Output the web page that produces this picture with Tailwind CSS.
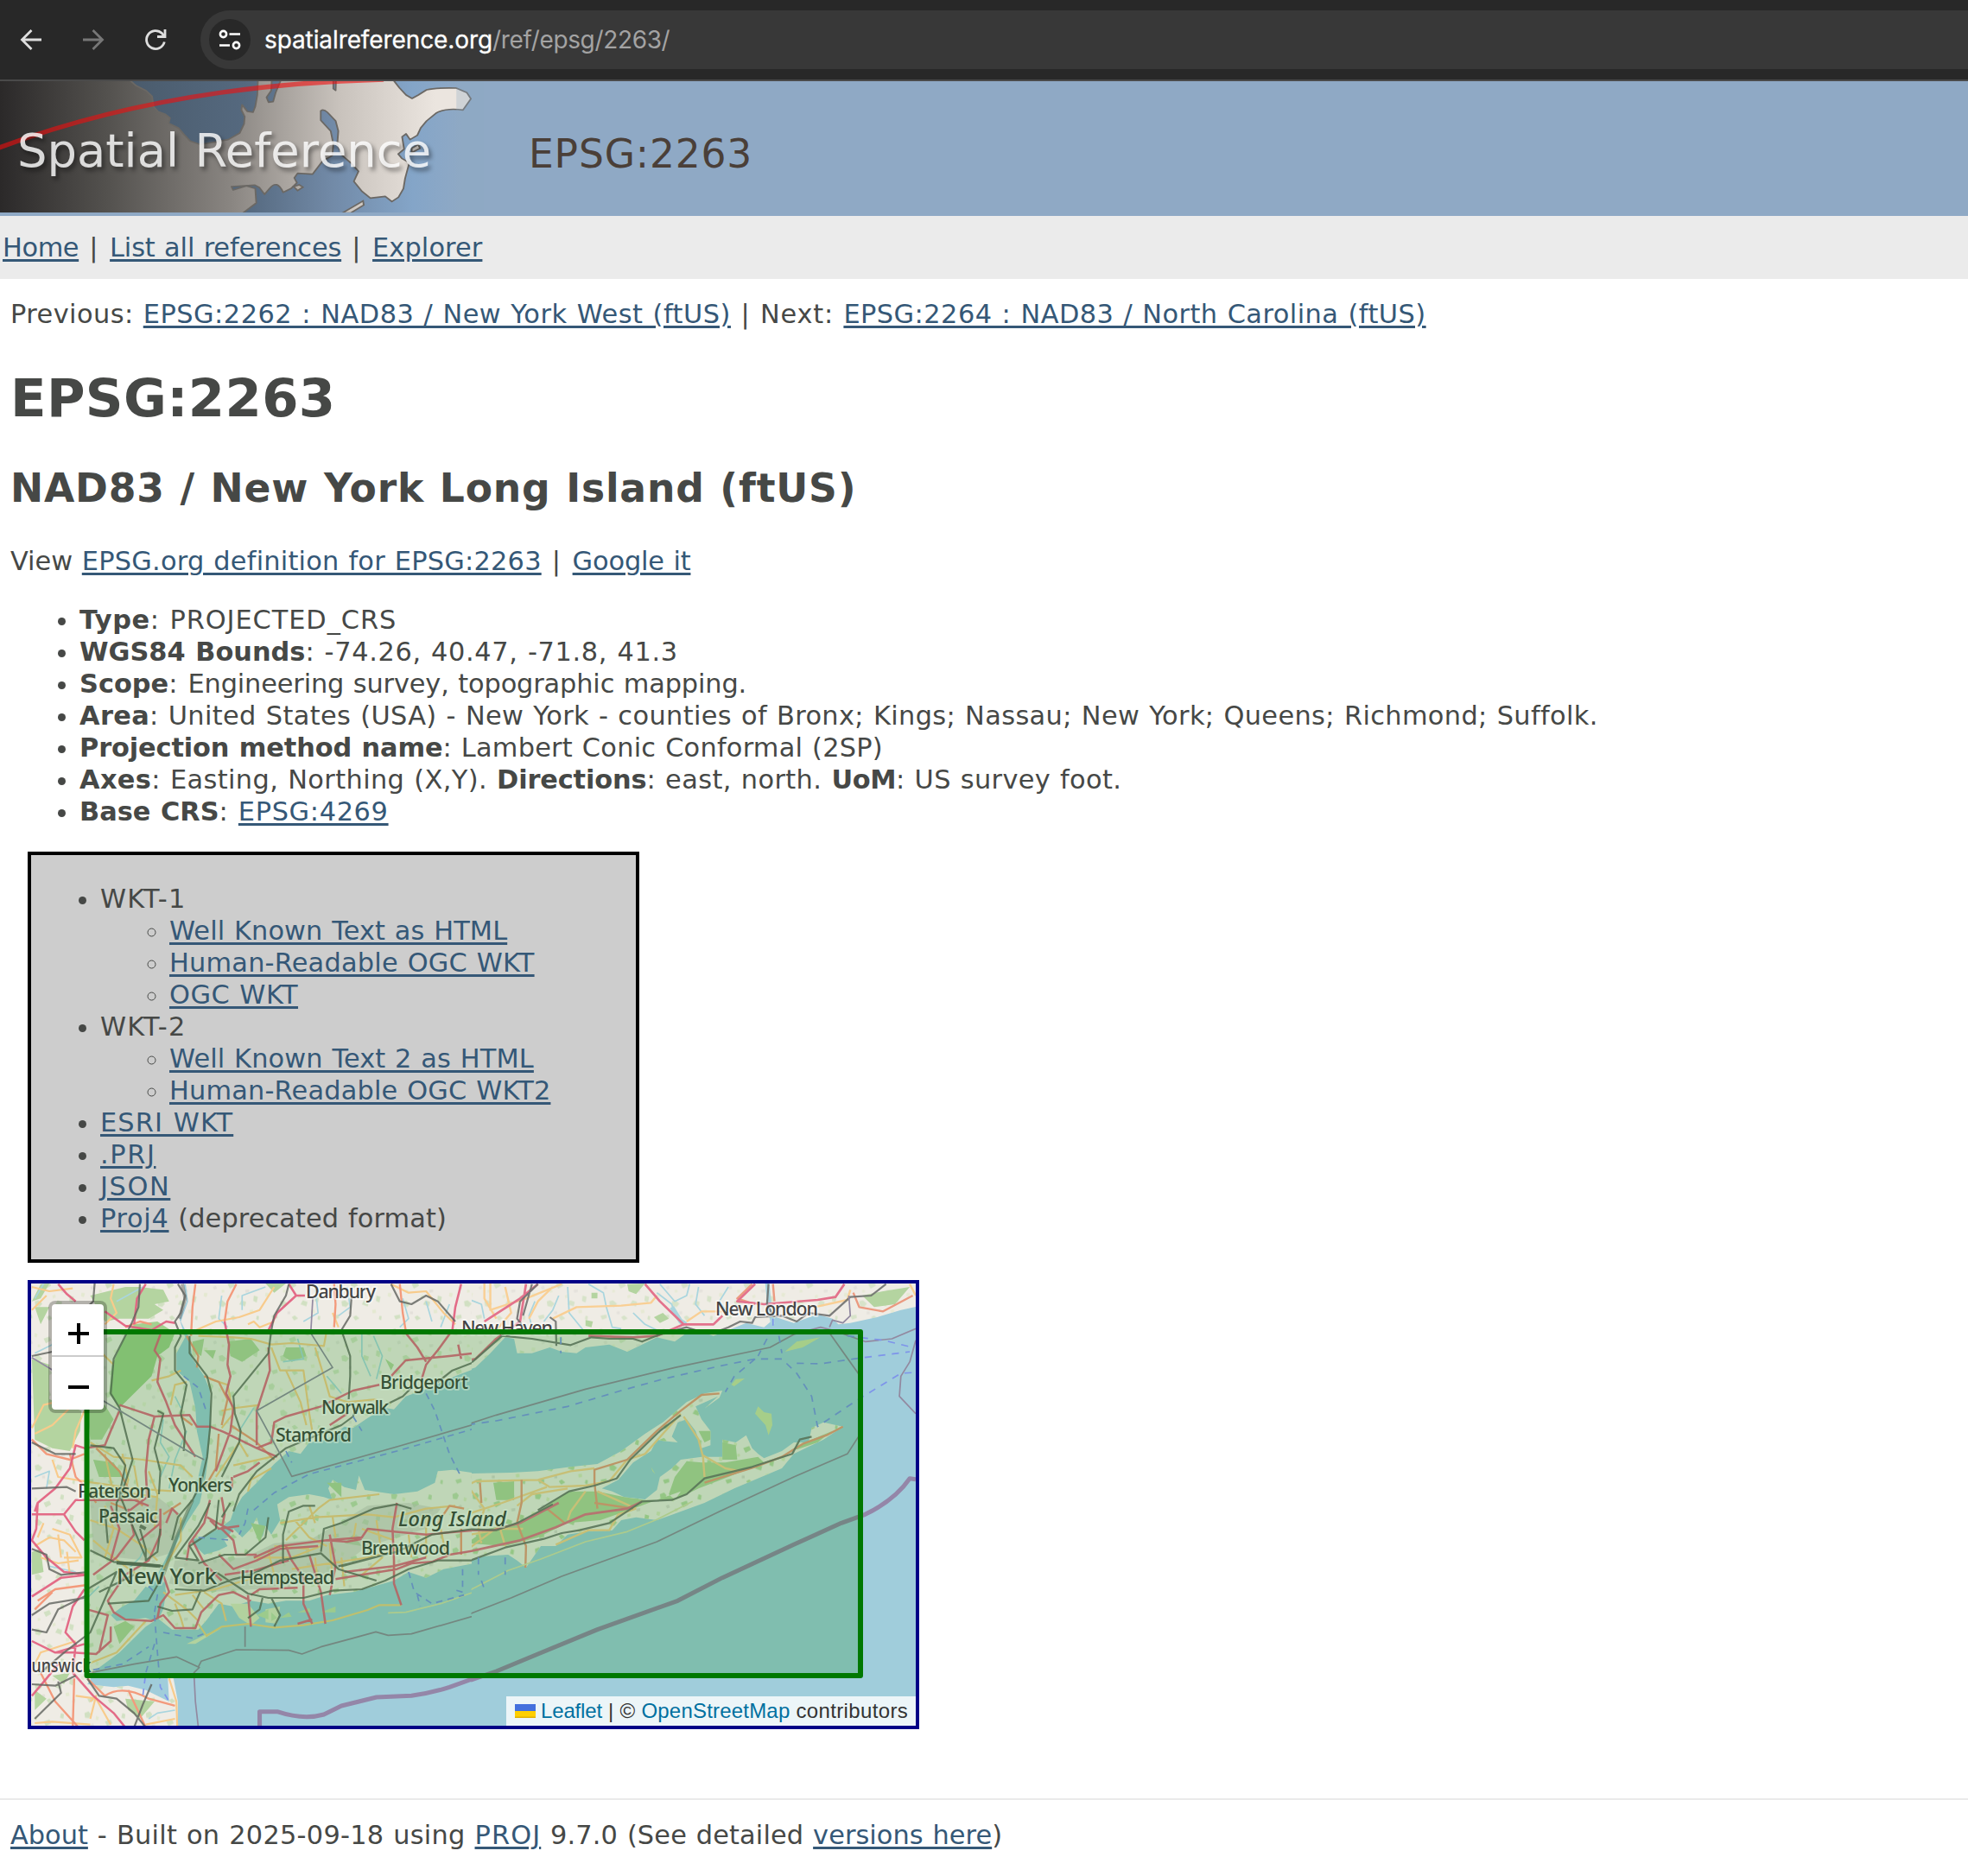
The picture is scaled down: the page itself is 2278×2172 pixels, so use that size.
<!DOCTYPE html>
<html lang="en">
<head>
<meta charset="utf-8">
<title>EPSG:2263</title>
<script src="https://cdn.jsdelivr.net/npm/@tailwindcss/browser@4"></script>
</head>
<body class="bg-white text-[#464846] font-['DejaVu_Sans',sans-serif] text-[30.4px] leading-[37px] [word-spacing:1px] overflow-hidden">

<!-- Browser toolbar -->
<div class="flex items-center h-[94px] bg-[#282828] border-b-2 border-[#4a4a4a] pl-4">
  <svg class="w-10 h-10 shrink-0" viewBox="0 0 40 40" fill="none" stroke="#dedede" stroke-width="2.8"><path d="M32 20H10M20.500 9L9.500 20L20.500 31"/></svg>
  <svg class="w-10 h-10 shrink-0 ml-8" viewBox="0 0 40 40" fill="none" stroke="#777" stroke-width="2.8"><path d="M8 20H30M19.500 9L30.500 20L19.500 31"/></svg>
  <svg class="w-10 h-10 shrink-0 ml-8" viewBox="0 0 40 40" fill="none" stroke="#dedede" stroke-width="2.8"><path d="M30.300 22.500A10.500 10.500 0 1 1 27.500 12.600L30 15.500"/><path d="M31 8V16.500H22"/></svg>
  <div class="flex items-center flex-1 h-[68px] ml-8 rounded-l-[34px] bg-[#383838] pl-[10px]">
    <div class="w-12 h-12 rounded-full bg-[#282828] flex items-center justify-center">
      <svg class="w-7 h-7" viewBox="0 0 28 28" fill="none" stroke="#fff" stroke-width="2.600"><circle cx="6.500" cy="7.500" r="3.600"/><path d="M13.500 7.500H26M2 20.500H14"/><circle cx="21.500" cy="20.500" r="3.600"/></svg>
    </div>
    <div class="ml-4 font-['Inter',sans-serif] text-[28px] [word-spacing:0] text-[#a3a3a3]"><span class="text-white tracking-[-0.1px] [-webkit-text-stroke:0.3px_white]">spatialreference.org</span><span class="tracking-[-0.35px]">/ref/epsg/2263/</span></div>
  </div>
</div>

<!-- Banner -->
<header class="flex items-center h-[156px] bg-[#8fa9c5]">
  <svg class="w-[560px] h-[152px] mb-1 shrink-0" viewBox="0 42 1463 456" preserveAspectRatio="none">
    <defs>
      <linearGradient id="land" gradientUnits="userSpaceOnUse" x1="0" y1="0" x2="1463" y2="0"><stop offset="0" stop-color="#2b2929"/><stop offset=".22" stop-color="#53514e"/><stop offset=".48" stop-color="#8a8682"/><stop offset=".7" stop-color="#c8c2bc"/><stop offset=".9" stop-color="#ebe5df"/></linearGradient>
      <linearGradient id="sea" gradientUnits="userSpaceOnUse" x1="390" y1="0" x2="1400" y2="0"><stop offset="0" stop-color="#4a5b6c"/><stop offset=".35" stop-color="#55697f"/><stop offset=".6" stop-color="#7189a6"/><stop offset=".85" stop-color="#84a5c8"/><stop offset="1" stop-color="#8fa9c5"/></linearGradient>
    </defs>
    <rect y="42" width="1463" height="456" fill="url(#land)"/>
    <g fill="url(#sea)" stroke="#6b6864" stroke-width="5" stroke-linejoin="round">
      <path d="M390 36L412 58L442 75L460 95L464 130L478 148L500 157L514 170L510 188L540 205L555 225L575 250L605 262L640 255L690 245L725 222L738 190L740 165L730 142L732 124L748 147L765 150L772 130L778 90L780 36Z"/>
      <path d="M822 36L820 75L806 98L812 115L826 113L834 80L850 36Z"/>
      <path d="M1008 36L1008 68L1015 74L1016 36Z"/>
      <path d="M970 145Q978 138 990 150L1015 180L1023 215L1020 260L1035 300L1060 325L1084 355L1070 390L1095 425L1120 448L1165 442L1185 460L1205 445L1220 415L1225 380L1232 350L1238 325L1215 310L1204 295L1222 278L1216 235L1228 225L1240 245L1262 230L1272 205L1290 180L1320 152Q1350 134 1400 142L1424 103L1412 82L1380 66Q1320 64 1290 72L1265 90L1246 102L1228 90L1208 65L1188 36L1470 36L1470 504L730 504L775 465L772 415L745 406L705 420L700 408L770 403L785 412L800 435L815 415Q838 382 856 428L880 415L898 395L890 378L900 362L945 365L975 320L1005 300L1008 260L1000 215L970 178Z"/>
    </g>
    <g fill="url(#land)" stroke="#6b6864" stroke-width="5"><path d="M1035 500L1098 458L1100 472L1060 500Z"/><path d="M888 408L905 402L916 410L900 422Z"/><path d="M1245 275L1265 262L1270 275L1245 290Z"/></g>
    <rect x="1380" y="42" width="90" height="456" fill="#8fa9c5" fill-opacity=".3"/>
    <path d="M-5 274Q500 55 1160 36" fill="none" stroke="#f00d0d" stroke-opacity=".6" stroke-width="16"/>
    <g transform="scale(2.613 3)" font-family="DejaVu Sans" font-size="53">
      <text class="[text-shadow:3px_4px_5px_rgba(0,0,0,.5)]" x="20" y="113.500" textLength="479" lengthAdjust="spacingAndGlyphs" fill="#fff" fill-opacity=".82">Spatial Reference</text>
    </g>
  </svg>
  <div class="ml-[52px] mt-[13px] text-[45.6px] leading-[56px] tracking-[0.8px] text-[#4a3f38]">EPSG:2263</div>
</header>

<nav class="h-[73px] bg-[#ebebeb] pl-[3px] pt-[18px] whitespace-pre"><a class="text-[#355877] underline decoration-[3px] underline-offset-[3px] tracking-[-0.4px]">Home</a><span class="tracking-[1.45px]"> | </span><a class="text-[#355877] underline decoration-[3px] underline-offset-[3px] tracking-[-0.15px]">List all references</a><span class="tracking-[1.45px]"> | </span><a class="text-[#355877] underline decoration-[3px] underline-offset-[3px] tracking-[0.1px]">Explorer</a></nav>

<main class="pl-3 whitespace-nowrap">
  <p class="mt-[22px]"><span class="tracking-[0.44px]">Previous: </span><a class="text-[#355877] underline decoration-[3px] underline-offset-[3px] tracking-[0.5px]">EPSG:2262 : NAD83 / New York West (ftUS)</a><span class="tracking-[0.8px]"> | Next: </span><a class="text-[#355877] underline decoration-[3px] underline-offset-[3px] tracking-[0.46px]">EPSG:2264 : NAD83 / North Carolina (ftUS)</a></p>
  <h1 class="mt-[42px] text-[60.8px] leading-[74px] font-bold tracking-[0.35px]">EPSG:2263</h1>
  <h2 class="mt-10 text-[45.6px] leading-[55px] font-bold tracking-[0.81px]">NAD83 / New York Long Island (ftUS)</h2>
  <p class="mt-[38px]">View <a class="text-[#355877] underline decoration-[3px] underline-offset-[3px] tracking-[0.22px]">EPSG.org definition for EPSG:2263</a><span class="tracking-[1.45px]"> | </span><a class="text-[#355877] underline decoration-[3px] underline-offset-[3px] tracking-[-0.15px]">Google it</a></p>
  <ul class="mt-[31px] pl-20 list-disc">
    <li><b class="tracking-[0.6px]">Type</b><span class="tracking-[0.92px]">: PROJECTED_CRS</span></li>
    <li><b>WGS84 Bounds</b><span class="tracking-[0.65px]">: -74.26, 40.47, -71.8, 41.3</span></li>
    <li><b>Scope</b><span class="tracking-[0.7px]">: </span><span class="tracking-[-0.14px]">Engineering survey, topographic mapping.</span></li>
    <li><b class="tracking-[0.36px]">Area</b><span class="tracking-[0.36px]">: United States (USA) - New York - counties of Bronx; Kings; Nassau; New York; Queens; Richmond; Suffolk.</span></li>
    <li><b class="tracking-[-0.13px]">Projection method name</b><span class="tracking-[0.23px]">: Lambert Conic Conformal (2SP)</span></li>
    <li><b class="tracking-[0.36px]">Axes</b><span class="tracking-[0.38px]">: Easting, Northing (X,Y). </span><b class="tracking-[-0.15px]">Directions</b><span class="tracking-[0.39px]">: east, north. </span><b class="tracking-[-0.4px]">UoM</b><span class="tracking-[0.34px]">: US survey foot.</span></li>
    <li><b>Base CRS</b><span class="tracking-[0.7px]">: </span><a class="text-[#355877] underline decoration-[3px] underline-offset-[3px] tracking-[0.64px]">EPSG:4269</a></li>
  </ul>

  <div class="mt-7 ml-5 w-[708px] h-[476px] border-4 border-black bg-[#cdcdcd] pt-8">
    <ul class="list-disc pl-20">
      <li><span class="tracking-[1.16px]">WKT-1</span>
        <ul class="pl-20 list-[circle]">
          <li><a class="text-[#355877] underline decoration-[3px] underline-offset-[3px] tracking-[0.1px]">Well Known Text as HTML</a></li>
          <li><a class="text-[#355877] underline decoration-[3px] underline-offset-[3px] tracking-[0.2px]">Human-Readable OGC WKT</a></li>
          <li><a class="text-[#355877] underline decoration-[3px] underline-offset-[3px] tracking-[0.5px]">OGC WKT</a></li>
        </ul>
      </li>
      <li><span class="tracking-[1.16px]">WKT-2</span>
        <ul class="pl-20 list-[circle]">
          <li><a class="text-[#355877] underline decoration-[3px] underline-offset-[3px] tracking-[0.12px]">Well Known Text 2 as HTML</a></li>
          <li><a class="text-[#355877] underline decoration-[3px] underline-offset-[3px] tracking-[0.17px]">Human-Readable OGC WKT2</a></li>
        </ul>
      </li>
      <li><a class="text-[#355877] underline decoration-[3px] underline-offset-[3px] tracking-[1.1px]">ESRI WKT</a></li>
      <li><a class="text-[#355877] underline decoration-[3px] underline-offset-[3px] tracking-[1.6px]">.PRJ</a></li>
      <li><a class="text-[#355877] underline decoration-[3px] underline-offset-[3px] tracking-[1.6px]">JSON</a></li>
      <li><a class="text-[#355877] underline decoration-[3px] underline-offset-[3px] tracking-[0.7px]">Proj4</a><span class="tracking-[0.1px]"> (deprecated format)</span></li>
    </ul>
  </div>

  <!-- Map -->
  <div class="relative mt-5 ml-5 w-[1032px] h-[520px] border-4 border-[#000086] overflow-hidden">
    <svg class="block w-[1024px] h-[512px]" viewBox="36 1486 1024 512" fill="none" stroke-linejoin="round">
      <defs>
        <clipPath id="west"><rect x="36" y="1486" width="510" height="512"/></clipPath>
        <clipPath id="east"><rect x="545.500" y="1486" width="515" height="512"/></clipPath>
        <pattern id="speck" width="210" height="190" patternUnits="userSpaceOnUse">
          <g fill="#b9d7a6"><path d="M20 20l14-6 8 10-6 14-14-2zM90 50l20-8 6 14-18 10zM150 20l10 4-2 16-12-4zM60 110l12-4 14 12-10 12-14-4zM130 120l8-14 16 6-4 16zM30 160l20-4 2 12-16 6zM180 90l14 4-4 20-12-6zM100 165l10-6 12 10-14 8zM190 160l8 2-2 14-8-4z"/></g>
          <g fill="#dbe6c0"><path d="M60 30l10 4-4 12-8-4zM120 90l10-4 2 10-10 4zM10 80l12 2-4 14-10-4zM165 140l12-2 2 12-12 2zM70 70l8 0 2 8-10 2z"/></g>
          <g fill="#d9d6d0"><path d="M40 60l10-4 4 10-10 4zM150 70l14-2 0 10-12 2zM85 145l10 0 0 10-10 0z"/></g>
        </pattern>
      </defs>
      <rect x="36" y="1486" width="1024" height="512" fill="#a0cddb"/>
      <!-- eastern half -->
      <g clip-path="url(#east)"><g transform="translate(540 1470) scale(.34438 .33333)">
        <g fill="#efece5">
          <path id="coast-east" d="M-60 30H1530V125L1460 140L1380 165L1290 185L1250 190L1230 170L1180 155L1100 185L1040 165L1000 200L940 185L880 210L830 230L760 205L700 250L640 235L590 260L540 285L480 260L400 270L370 290L320 285L280 270L220 290L170 290L160 240L130 235L80 290L30 340L-60 370Z"/>
          <path id="island-east" d="M-60 710L150 705L240 700L350 685L440 675L520 630L600 570L660 530L740 460L800 430L860 420L850 445L800 482L845 440L770 475L790 520L820 560L820 610L790 620L770 560L740 520L710 530L690 580L710 600L660 595L640 590L620 630L560 670L510 730L455 760L490 770L530 790L600 798L640 765L650 720L690 690L720 660L790 650L860 650L860 590L905 600L940 575L960 620L980 640L1000 655L1060 630L1100 600L1150 600L1160 550L1200 530L1265 545L1200 590L1100 640L1060 690L900 760L800 810L640 870L570 860L520 870L490 905L400 910L340 920L300 960L250 960L200 1035L170 1010L140 990L60 995L-60 1030Z"/>
          <path d="M970 500L980 475L1000 495L1025 500L1028 540L1015 575L1005 540ZM1070 285L1110 250L1190 235L1130 270ZM890 400L905 380L935 378L900 405ZM620 685L635 710L625 700Z" fill="#d0e2ac"/>
        </g>
        <use href="#coast-east" fill="url(#speck)" fill-opacity=".45"/>
        <use href="#island-east" fill="url(#speck)"/>
        <g fill="#b4d4a0">
          <path d="M0 950L70 900L180 880L270 820L340 770L440 770L530 790L600 800L700 800L720 770L560 830L450 870L340 880L240 930L130 960ZM680 780L700 720L740 665L790 670L870 670L980 650L1000 670L880 720L780 760L700 800ZM860 600L905 610L910 660L860 660ZM1100 620L1160 590L1230 560L1180 600L1110 625ZM780 560L820 560L820 590L800 600ZM1330 90L1400 75L1490 60L1440 120L1370 130ZM90 740L160 735L160 800L100 800Z"/>
          <path d="M540 50L600 48L570 85L545 75ZM400 175L425 180L420 200L400 195ZM630 165L660 150L680 170L650 185ZM420 80h20v20h-20z"/>
        </g>
        <g stroke="#a9d5de" stroke-width="5">
          <path d="M410 50L460 80L470 130L490 200L520 205M310 90L290 140L260 180M340 60L345 150L400 220M640 80L690 120L700 160L740 185M650 50L700 110L740 90L750 50M0 100L50 120L60 170M880 60L850 110L880 150M230 110L210 160L220 200M560 150L600 190L640 210M780 60L770 120L800 160"/>
          <path d="M690 130L720 180L735 190" stroke-width="16"/><path d="M1010 40L1020 140L1030 190" stroke-width="14"/>
        </g>
        <g stroke="#f9cf94" stroke-width="7">
          <path d="M60 40L60 100L100 170M290 60L240 110L210 170M130 60L150 150L100 210M290 170L370 130L520 125L620 115L640 90M740 180L790 145L860 145M1170 130L1280 105L1290 70M80 40L80 140L200 100L320 50M1490 50L1510 90"/>
          <path d="M-40 770L30 735L240 730L350 700L430 690M0 745L60 830L40 900L50 950M240 730L280 755L400 750L480 735L540 660L600 640L720 500M0 850L120 810L270 755M400 770L350 840L340 870M440 770L570 830M730 510L780 590L795 650L800 720M795 645L870 690L920 700M-40 930L120 900L190 900M-20 990L110 890L130 960M300 955L410 905L480 905L510 850L570 830M170 820L220 780L340 760"/>
        </g>
        <g stroke="#eb9a80" stroke-width="7"><path d="M850 430L790 435L720 490L640 560L540 660L430 695L430 740L440 830M1265 545L1210 575L1130 605L1060 650L970 685L800 740M185 730L185 810L170 880L200 960L198 1035M45 740L50 810M330 880L270 830M430 810L560 830M1300 80L1320 130L1400 145L1500 90M960 50L910 100L970 120M1030 50L1035 110"/></g>
        <g stroke="#e3728c" stroke-width="8"><path d="M240 50L180 100L60 180M200 50L180 180L100 240L30 310L-50 325M600 50L650 110L730 190L830 190L860 160M970 50L910 110L1000 120L1180 105L1240 95L1270 50M730 190L640 230L560 235L410 230M-40 905L90 905L180 880L310 810M-40 990L180 940L300 895L400 850L540 830L590 805"/></g>
        <g stroke="#6f716f" stroke-width="6.500" stroke-opacity=".9"><path d="M240 50L180 110L170 170L185 190M220 50L190 160M-40 325L20 320L120 230L220 240L350 262L420 235L480 240L560 240L590 250L650 225L740 200L800 220L830 220L880 200L920 180L960 185L970 165L1060 160L1110 180L1150 150L1220 160L1290 95L1360 90L1410 50M1015 50L1010 120L1030 160M280 165L300 180L302 265M720 505L650 560L550 660L505 725L430 750L345 770L240 835M1160 580L1120 590L1095 640L960 685L800 725L740 780L690 800L590 805L480 880L380 905L320 915L260 935L130 965L0 1015M-40 900L100 905L170 880L290 815"/></g>
        <path d="M-20 1130L140 1045L250 1005L400 945L540 910L640 868L760 805" stroke="#d8deb0" stroke-width="5"/>
        <g stroke="#9289a0" stroke-width="5"><path d="M-50 555L100 505L400 415L700 340L1020 270L1100 225L1190 200L1230 210L1340 250L1430 240L1510 205M1220 220L1320 365L1330 560L1280 640L1100 720L850 840L640 945L320 1065L150 1140L-50 1220M1510 245L1490 320L1460 370L1455 440L1510 500M1220 200L1230 175L1265 185L1290 160L1285 90"/></g>
        <path d="M-40 1445L100 1395L240 1335L440 1250L710 1150L860 1070L1100 955L1260 880L1340 850Q1440 800 1490 725L1510 728" stroke="#9486a8" stroke-width="15"/>
        <g stroke="#7e94ea" stroke-width="5" stroke-dasharray="24 22"><path d="M-40 545L100 525L340 475L520 420L660 380L850 335L970 310L1060 310L1110 360L1160 440L1180 545L1310 455L1460 360L1510 357M970 310L900 370L870 425M1110 325L1190 327L1300 310L1490 285M1010 240L980 300M1050 230L1060 290M1280 230L1400 245L1500 270M1030 170V200M317 235V290M40 1000V1060M130 1000V1060M50 1080L60 1110"/></g>
      </g></g>
      <!-- western half -->
      <g clip-path="url(#west)"><g transform="translate(20 1470) scale(.33801 .33333)">
        <g fill="#efece5">
          <path id="coast-west" d="M40 40H1590V335L1500 370L1400 415L1330 440L1290 485L1260 480L1200 515L1150 550L1120 545L1060 590L1000 600L970 640L930 630L880 675L820 740L770 790L740 840L730 870L690 900L650 920L620 940L590 980L540 1050L500 1090L480 1130L440 1100L400 1150L360 1170L320 1200L340 1220L440 1210L470 1220L440 1240L350 1330L270 1390L240 1440L330 1450L380 1445L440 1460L520 1500L515 1410L535 1420L550 1500V1600H40Z"/>
          <path id="island-west" d="M500 1160L480 1210L530 1250L620 1250L650 1215L690 1160L740 1170L800 1150L860 1160L920 1150L1000 1150L1060 1130L1150 1120L1220 1100L1290 1080L1340 1050L1400 1070L1460 1040L1590 1015V710L1490 695L1440 700L1430 740L1370 770L1290 780L1190 765L1170 715L1160 765L1120 755L1080 730L1065 760L1080 800L1050 790L1000 780L930 790L890 815L900 870L870 920L850 890L840 930L820 860L800 900L770 930L740 900L720 930L640 960L600 940L560 1000L510 1080Z"/>
          <path d="M730 1160L790 1160L830 1210L800 1235L760 1210ZM850 1180L900 1170L890 1230L850 1225ZM580 1300L650 1265L700 1245L610 1300Z" fill="#dfe6c6"/>
        </g>
        <use href="#coast-west" fill="url(#speck)" fill-opacity=".55"/>
        <use href="#island-west" fill="url(#speck)" fill-opacity=".8"/>
        <g fill="#b4d4a0">
          <path d="M50 310L110 330L110 450L220 490L215 560L180 630L120 620L60 590ZM250 90L370 60L420 60L500 70L520 110L470 120L500 140L450 170L350 170L300 180ZM850 48L920 48L880 80ZM240 480L300 470L330 520L290 590L250 590ZM80 50L110 48L80 100L50 110ZM60 130L110 130L80 190ZM600 250L640 240L630 300L600 280ZM720 250L800 240L830 280L770 320L730 300ZM920 270L980 270L990 300L940 320L910 300ZM640 280L680 280L670 310ZM260 660L330 670L360 720L280 720ZM50 980L80 970L90 1050L50 1060ZM120 1410L180 1400L160 1440ZM370 1490L470 1500L420 1560L380 1530ZM330 1240L370 1220L400 1240L350 1300ZM1060 740L1110 740L1110 790ZM800 880L850 890L830 950ZM1260 310L1290 330L1280 350ZM60 1460L100 1490L60 1530ZM1120 950L1150 920L1180 960Z"/>
          <path d="M370 230L400 190L480 180L540 220L520 270L480 300L460 370L400 430L350 480L315 430L325 330Z" fill="#a3d08f"/>
        </g>
        <g fill="#cbc9c3" fill-opacity=".55"><path d="M250 800L480 790L560 850L540 980L440 1010L260 990ZM540 1010L780 1000L880 950L1000 940L1200 820L1340 810L1450 830L1400 900L1200 960L1040 1080L820 1110L640 1120L520 1090Z"/></g>
        <path d="M570 50L580 110L555 170L575 235L545 290L545 350L590 390L610 480L615 560L635 650L620 720L600 810L560 890L530 960L500 1020L470 1080L430 1120L460 1160L455 1190L480 1220L500 1180L510 1120L500 1080L510 1020L545 950L580 880L625 810L645 720L655 640L662 540L660 420L640 370L600 310L590 240L560 180L585 110L577 50Z" fill="#a0cddb"/>
        <path d="M600 935L700 925L720 960L690 975L640 990L610 960ZM660 1200L690 1170L710 1220L670 1250ZM900 1200L1000 1160L1100 1160L1200 1120L1290 1100L1300 1150L1200 1180L1080 1210L930 1235Z" fill="#a0cddb"/>
        <path d="M900 1210l30-20 10 15zM960 1190l40-15 5 15zM1040 1190l50-20 0 20zM820 1200l40-20 0 35zM870 1190l20 20-20 10z" fill="#c4deb0"/>
        <g stroke="#a9d5de" stroke-width="5">
          <path d="M90 50L60 100M130 200L120 260L60 290M1180 210L1180 300L1210 370M1220 230L1250 300L1230 380M1130 60L1140 130L1100 160M850 60L770 90L770 140M500 520L490 600L520 650L490 720M580 560L540 660L520 760M540 440L560 480M1060 370L1110 430M430 60L340 110M1020 60L1030 150L980 180M1320 100L1340 170L1310 200M1400 110L1420 180M810 480L760 560M700 90L690 170L720 200M370 700L360 790M440 960L420 1000L380 1040M1480 120L1450 200M960 240L980 310L910 320M450 1560L480 1540L540 1530M110 1030L200 1050M60 720L110 700L100 760M280 1100L230 1150"/>
        </g>
        <g stroke="#f8cb8b" stroke-width="6.500">
          <path d="M50 60L110 75L190 65M50 140L100 90M330 50L320 100L340 150L300 190M290 290L330 330M880 60L830 140L760 165L680 180L590 220L540 220M790 190L810 180L830 200L880 180M1100 200L1080 150M1280 50L1340 80L1400 75L1460 150L1500 190M620 230L740 235L800 240L870 260L940 255L1050 265L1060 210M870 270L900 350L980 350L1000 500L1010 560M920 350L970 460L990 540M1020 270L1050 370L1070 440L1130 460L1230 450M580 390L540 400L525 470M460 385L520 370L560 350M660 380L720 400L740 500L700 550M700 490L750 480L830 470M50 550L90 470L130 460L180 480L120 540L60 570M230 490L200 560L190 620M250 600L330 650L430 660L560 680L600 720M120 660L140 720L260 740L400 760L540 770M250 870L340 900L430 960L480 1010M260 940L330 1000L410 1060M300 820L330 900L300 1000M360 640L380 730L360 810M450 700L480 780L470 900M60 960L110 930L160 940L200 980M120 900L180 920L220 1000L160 1000M170 980L180 1060M240 1370L340 1330L440 1220M560 860L560 940L500 1040M540 1130L680 1110L810 1070M540 1160L560 1210L570 1245M500 1120L580 1180L620 1220M870 690L800 730L790 770M680 720L760 600L790 650M740 680L870 650M900 880L1020 860L1200 850L1290 860L1400 830L1500 820M950 870L1000 930L1060 960M920 940L1030 830L1070 800L1240 780M1000 820L1020 880M1070 950L1080 1080M1110 1000L1120 1100M1160 880L1150 940M1230 870L1250 1000L1180 1060M1400 850L1400 1000M1340 920L1350 1000M640 1120L700 1160L715 1220M600 1130L640 1180M810 1000L940 1000L1040 960M860 980L880 1060M60 1575L120 1570L250 1580M250 1500L270 1480L250 1560M200 1480L270 1490L320 1580M60 1370L80 1330L200 1290M520 1420L545 1500L548 1590M440 1580L540 1560M1290 960V1060M1450 900L1470 1000M80 1000L140 1020L210 1010M140 920L150 1000M90 880L70 930M300 640L330 780M400 680L420 800M260 780L340 770L480 790M880 960L1000 970M940 1040L1200 1000L1400 950M1020 1000L1030 1100M1180 900L1290 940M1080 860L1090 930"/>
          <path d="M650 1270L700 1240L790 1230L880 1243L980 1235L1080 1218L1200 1182L1240 1165L1315 1165M620 1230L650 1275" stroke="#efd089"/>
        </g>
        <g stroke="#f39a7c" stroke-width="7"><path d="M610 50L600 130L595 230M750 50L720 110L710 180M460 190L420 180L370 200M580 230L620 300L615 340M640 370L690 390L720 450L700 540M1085 50L1090 120L1085 200M1310 50L1320 150L1330 210M50 590L100 640L180 660L230 640M180 640L200 720L240 760L270 810M270 620L350 700L390 780L430 820M560 510L600 540M690 570L680 690L640 760M730 540L820 600L880 660M70 1150L130 1110L240 1095M60 1180L120 1120M190 1590L195 1420M80 1400L130 1500L210 1590M240 1420L300 1480Q360 1440 450 1490L540 1515M380 1460L440 1590M1440 880L1480 820L1530 830M500 850L560 810M320 810L370 830M1520 900V990"/></g>
        <g stroke="#e2607f" stroke-width="7.500" stroke-opacity=".92"><path d="M140 50L170 85L200 110M300 145L370 195L460 210L510 180L540 185M440 50L410 100L400 190M930 50L955 90L890 150L860 210M955 90L985 90M1520 50L1500 130L1490 210L1440 280L1400 330L1385 380M1330 220L1370 270L1400 320M1280 370L1330 315L1480 300L1568 290M1510 260L1520 310M490 225L470 280L490 310L480 390L510 460L540 540L610 650M710 180L725 260L720 330L730 370L715 430L740 480L730 560L680 700M860 270L865 350L820 490L820 610M350 470L410 490L470 510L590 505L615 545L660 545L710 565L820 620L890 650M820 620L870 600L880 530L920 510L1040 475L1150 420L1240 400M1070 540L1130 500M350 490L320 560L300 610L230 620L200 610L180 690L130 760L70 810L60 840M470 510L450 590L440 700L445 790L380 840M50 850L160 850L200 800L300 800L400 800L450 820M70 810L65 900L50 940L100 1000L160 1050L240 1060M160 850L200 910L230 940M50 1135L150 1070L240 1060M230 1110L190 1170L165 1260L200 1300L190 1400L260 1480L330 1540L370 1590M50 1290L130 1330L230 1300M130 1330L190 1330L270 1335L320 1290L320 1240M280 1330L310 1200L240 1180M50 1480L100 1420L140 1370M320 820L350 900L320 1010M380 830L400 920L340 1000L260 1060M490 830L490 920L450 1010L370 1060L310 1150L330 1190L370 1215L460 1220L500 1200L540 1245L610 1245L630 1190L690 1130L740 1120L800 1150M500 1060L520 1120L490 1160L480 1210M660 800L640 880L590 950L580 1010M700 790L710 850L700 900L740 940L750 990L820 990M510 880L530 830L550 850M600 940L640 1020L700 1080M690 990L740 1040L820 1010L900 970L1030 960M810 1000L900 960L1060 940L1180 930L1200 900L1290 910L1400 920L1568 905M710 1060L810 1045L930 1010M1060 940L1130 945L1180 935M920 960L940 1010L980 1070L980 1160L1010 1230M1000 990L1040 1120L1055 1230M1070 920L1090 1030L1070 1130M1300 810L1285 900L1290 1010L1290 1090L1315 1165M1090 1075L1180 1060L1300 1040L1350 1020L1420 1015L1480 990L1568 975M1120 1050L1290 1030L1400 1000M800 1130L830 1110L960 1105M960 1230L1010 1215M790 1130L800 1240M740 720L790 700L830 670M735 720V760M650 860L740 910M440 860L490 880L420 940M660 870L690 900L760 890"/></g>
        <g stroke="#61645f" stroke-width="6.500" stroke-opacity=".82"><path d="M265 48L260 110L240 130M420 50L415 130L390 190L330 310L320 430L350 480L370 560L395 660L360 770L340 810L340 850M930 50L920 90L880 160L870 210L860 290L740 440L745 500L765 560L760 600L700 720M1145 90L1140 160L1110 210L1140 300L1140 370L1135 450M1280 50L1310 110L1350 120L1400 90L1440 110L1500 180M50 600L130 640L200 640M550 50L575 90L560 150L540 180L560 230L540 270L540 350L580 400L560 500L575 560L570 630M590 230L590 290L650 370L665 430L660 550L650 650L630 740L600 800L550 860L530 940M480 490L500 500L470 620L490 700L485 780M250 610L330 620L370 680L350 780L370 830L440 1000M740 840L760 780L820 700L920 620L990 590L1110 540L1150 510L1160 480M1260 470L1320 440L1350 410M1440 390L1490 350L1568 320M50 760L170 755L200 770M50 970L100 990L110 1040L150 1060L240 1050M50 300L120 285M250 975L330 1015L420 1020L500 1030M240 1110L340 1050L250 1260L160 1330L80 1400M50 1250L100 1260L140 1180L240 1130M50 1200L110 1160L230 1140M300 830L310 950M420 900L440 970L440 1010L480 980L490 900M660 810L620 890L540 1000M690 800L680 900L590 960L620 1010L540 1000M730 810L700 860M540 1110L640 1115L700 1090L740 1075L800 1060L900 1010L1040 985L1100 1040L1230 1080M680 1050L790 1125L860 1140L980 1140L1080 1115L1180 1110L1260 1080L1340 1040L1440 1010L1568 1010M1110 1030L1260 990M620 1020L710 990L780 990L850 930L860 860M910 1020L910 920L930 840L980 820L1020 820M1040 980L1050 900L1110 880L1220 830L1300 815L1350 830M1100 1030L1300 980L1420 920L1568 900M840 1140L830 1180L790 1210M870 1140L900 1200L880 1240M480 1170L530 1185L600 1180L630 1110M50 1440L130 1445L200 1410M400 1590L430 1510L460 1440M240 1420L280 1480L340 1490L400 1540L440 1590M140 1430L150 1470L60 1560M310 1160L450 1150L500 1060M280 1120L400 1060M340 1020L480 1030"/><path d="M340 1018L490 1030M420 890L440 900" stroke-width="12"/><path d="M565 50L575 100L555 170M600 800L545 930L500 1060" stroke-width="12" stroke-opacity=".5"/></g>
        <g stroke="#9289a0" stroke-width="5"><path d="M50 305L310 465L600 640L640 660M1012 100L1005 220L1080 340L820 490L900 640L940 718L1300 615L1590 530M250 1400L400 1370L545 1345L620 1380L630 1360L750 1320L930 1322L975 1335L1040 1310L1150 1280L1228 1258L1270 1270L1350 1265L1590 1195M625 1380L605 1400L610 1500L620 1590M780 1240V1310"/></g>
        <path d="M1270 1192L1330 1190L1450 1160L1590 1110" stroke="#d8deb0" stroke-width="5"/>
        <path d="M830 1590V1535H890Q980 1565 1050 1545L1110 1515L1230 1485L1350 1480Q1420 1470 1480 1450L1590 1410" stroke="#9486a8" stroke-width="15"/>
        <g stroke="#7e94ea" stroke-width="5" stroke-dasharray="22 18"><path d="M810 835L880 775L1000 710L1300 630L1590 545M1400 430L1430 490L1480 640L1520 720M1150 510L1180 560M920 630L940 670M470 1200L480 1330L490 1450L520 1500M470 1300L440 1400L430 1480M260 1390L360 1370L450 1310M500 1260L600 1280L650 1260M790 830L780 880L760 920M1340 1050L1360 1120L1420 1160L1530 1130M1370 1130L1380 1170M1525 1040V1120L1490 1110M620 930L740 940M570 370L620 410L650 500M450 1100L480 1130L470 1190"/></g>
      </g></g>
      <!-- place names -->
      <g font-family="Noto Sans" font-size="21.500" font-weight="500" fill="#444" stroke="#fff" stroke-opacity=".55" stroke-width="4" paint-order="stroke" class="[word-spacing:0]">
        <text x="354" y="1503" textLength="81">Danbury</text>
        <text x="828" y="1522.500" textLength="119">New London</text>
        <text x="534" y="1545" textLength="106">New Haven</text>
        <text x="440" y="1608" textLength="102">Bridgeport</text>
        <text x="372" y="1637" textLength="78">Norwalk</text>
        <text x="319" y="1668.500" textLength="88">Stamford</text>
        <text x="195" y="1727" textLength="74">Yonkers</text>
        <text x="90" y="1734" textLength="85">Paterson</text>
        <text x="114" y="1762.500" textLength="69">Passaic</text>
        <text x="135" y="1833.500" textLength="116" font-size="26">New York</text>
        <text x="278" y="1834" textLength="109">Hempstead</text>
        <text x="461" y="1766.500" textLength="125" font-size="23.500" font-style="italic" font-weight="500">Long Island</text>
        <text x="418" y="1799.500" textLength="103">Brentwood</text>
        <text x="36.500" y="1935.500" textLength="69" lengthAdjust="spacingAndGlyphs">unswick</text>
      </g>
      <rect x="100.500" y="1542" width="895.500" height="398" fill="#008000" fill-opacity=".2" stroke="#007800" stroke-width="6"/>
    </svg>
    <div class="absolute left-5 top-5 w-[68px] h-[130px] rounded-lg border-4 border-black/25 bg-clip-padding bg-white flex flex-col text-black">
      <div class="h-[61px] border-b-2 border-[#ccc] flex items-center justify-center"><svg class="w-6 h-6 mt-2 ml-0.5" viewBox="0 0 24 24" stroke="#000" stroke-width="4"><path d="M0 12H24M12 0V24"/></svg></div>
      <div class="h-[61px] flex items-center justify-center"><svg class="w-6 h-6 mt-2 ml-0.5" viewBox="0 0 24 24" stroke="#000" stroke-width="4"><path d="M0 12H24"/></svg></div>
    </div>
    <div class="absolute right-0 bottom-0 w-[474px] h-[34px] bg-white/80 flex items-center pl-[10px] font-['Liberation_Sans',sans-serif] text-[24px] leading-[34px] text-[#333] [word-spacing:0]">
      <svg class="w-6 h-4 mr-[6px]" viewBox="0 0 24 16"><path fill="#4370dd" d="M0 0H24V8H0z"/><path fill="#ffcf00" d="M0 8H24V16H0z"/><path fill="#e0b000" d="M0 14.500H24V16H0z"/></svg>
      <div class="whitespace-pre"><span class="text-[#0070a0] tracking-[-0.15px]">Leaflet</span><span class="tracking-[0.3px]"> | © </span><span class="text-[#0070a0] tracking-[0.2px]">OpenStreetMap</span><span class="tracking-[0.35px]"> contributors</span></div>
    </div>
  </div>
</main>

<footer class="mt-20 border-t-2 border-[#eaeaea] pl-3 pt-[22px] whitespace-nowrap"><a class="text-[#355877] underline decoration-[3px] underline-offset-[3px]">About</a><span class="tracking-[0.25px]"> - Built on 2025-09-18 using </span><a class="text-[#355877] underline decoration-[3px] underline-offset-[3px] tracking-[1.1px]">PROJ</a><span class="tracking-[0.14px]"> 9.7.0 (See detailed </span><a class="text-[#355877] underline decoration-[3px] underline-offset-[3px] tracking-[0.06px]">versions here</a>)</footer>
</body>
</html>
